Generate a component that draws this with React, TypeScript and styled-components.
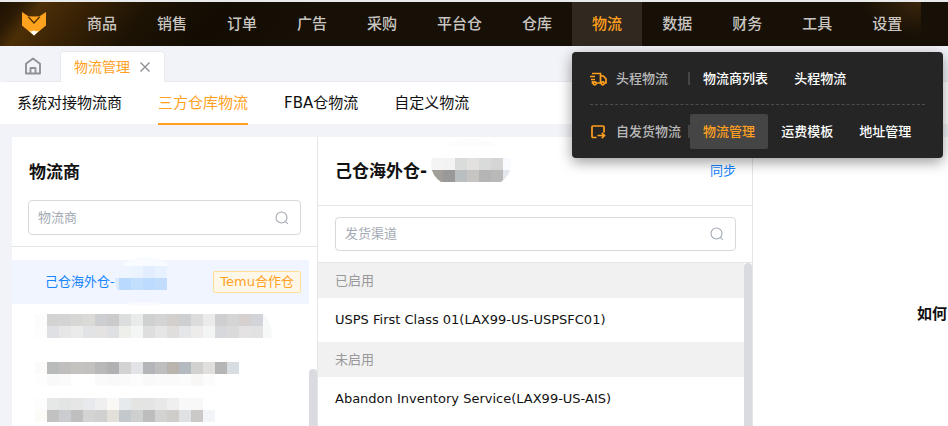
import React from "react";
import styled, { createGlobalStyle } from "styled-components";

const ORANGE = "#ffa01e";
const BLUE = "#1684fc";
const LINE = "#e4e5e7";
const CANVAS = "#f2f3f8";

const GlobalStyle = createGlobalStyle`
  *, *::before, *::after { box-sizing: border-box; }
  body {
    margin: 0;
    background: ${CANVAS};
    color: #111;
    font: 13px/20px "DejaVu Sans", "Noto Sans CJK SC", sans-serif;
  }
  button, input { font: inherit; }
  a { color: inherit; text-decoration: none; }
`;

const Page = styled.div`
  display: flex;
  flex-direction: column;
  height: 100vh;
  overflow: hidden;
  border-top: 2px solid #e9eaec;
`;

const Header = styled.header`
  display: flex;
  flex: none;
  height: 44px;
  background:
    radial-gradient(ellipse 60px 34px at 921px 0, #3a250b, transparent) 0 0 / 921px 100% no-repeat,
    linear-gradient(128deg, #1d1203 0, #2b1a04 18px, #4c2f07 34px, #3a2305 66px, #1d1304 120px, #120c03 180px, #171006 260px);
`;

const LogoLink = styled.a`
  display: flex;
  align-items: center;
  flex: none;
  width: 67px;
  padding-left: 21px;
`;

const Nav = styled.nav`
  display: flex;
`;

const NavItem = styled.div<{ $active?: boolean }>`
  position: relative;
  flex: none;
  display: flex;
  align-items: center;
  padding: 0 20px;
  font-size: 15px;
  font-weight: 500;
  white-space: nowrap;
  color: ${(p) => (p.$active ? ORANGE : "#c9c6c1")};
  background: ${(p) => (p.$active ? "#312820" : "transparent")};
`;

const Menu = styled.div`
  position: absolute;
  z-index: 5;
  top: 50px;
  left: 0;
  padding: 9px 18px;
  border-radius: 4px;
  background: #252525;
  box-shadow: 0 4px 14px rgba(0, 0, 0, 0.4);
  font-size: 13px;
`;

const MenuRow = styled.div`
  display: flex;
  align-items: center;
  height: 35px;
  & + & {
    height: 45px;
    margin-top: 8px;
    padding-top: 9px;
    border-top: 1px dashed #4d4d4d;
  }
`;

const MenuLabel = styled.span`
  display: flex;
  align-items: center;
  gap: 9px;
  width: 98px;
  color: #b9b9b9;
`;

const MenuLinks = styled.div`
  display: flex;
  align-items: center;
  width: 237px;
  &::before {
    content: "";
    width: 2px;
    height: 13px;
    background: #454545;
  }
`;

const MenuLink = styled.a<{ $active?: boolean }>`
  padding: 0 13px;
  border-radius: 2px;
  line-height: 35px;
  color: ${(p) => (p.$active ? ORANGE : "#fff")};
  background: ${(p) => (p.$active ? "#454545" : "transparent")};
`;

const TabBar = styled.div`
  display: flex;
  align-items: flex-end;
  flex: none;
  height: 36px;
  padding-left: 6px;
  background: linear-gradient(#e9eaed, #e9eaed) 6px 100% / 100% 1px no-repeat;
`;

const HomeButton = styled.button`
  display: flex;
  align-items: center;
  width: 54px;
  height: 35px;
  padding: 2px 0 0 18px;
  border: 0;
  background: none;
  color: #8f9299;
`;

const Tab = styled.div`
  display: flex;
  align-items: center;
  gap: 10px;
  height: 31px;
  padding: 0 14px 0 13px;
  border: 1px solid #e9eaed;
  border-bottom: 0;
  border-radius: 4px 4px 0 0;
  background: #fff;
  color: ${ORANGE};
  font-size: 14px;
`;

const CloseButton = styled.button`
  display: flex;
  padding: 0;
  border: 0;
  background: none;
  color: #8d8f94;
`;

const SubNav = styled.nav`
  display: flex;
  flex: none;
  gap: 36px;
  height: 43px;
  padding: 0 17px;
  background: linear-gradient(#fff, #fff) 0 0 / 100% 42px no-repeat;
  font-size: 15px;
`;

const SubLink = styled.a<{ $active?: boolean }>`
  height: 43px;
  line-height: 43px;
  white-space: nowrap;
  color: ${(p) => (p.$active ? ORANGE : "#111")};
  box-shadow: ${(p) => (p.$active ? `inset 0 -2px ${ORANGE}` : "none")};
`;

const Main = styled.main`
  display: flex;
  flex: 1;
  min-height: 0;
  margin: 12px 0 0 12px;
  background: #fff;
`;

const Column = styled.section<{ $width: number }>`
  display: flex;
  flex-direction: column;
  flex: none;
  width: ${(p) => p.$width}px;
  border-right: 1px solid ${LINE};
`;

const PanelHead = styled.div`
  padding: 20px 16px 11px;
  border-bottom: 1px solid ${LINE};
`;

const TitleBar = styled.div`
  display: flex;
  align-items: center;
  gap: 4px;
  height: 69px;
  padding: 0 16px;
  border-bottom: 1px solid ${LINE};
`;

const Title = styled.h2`
  margin: 0;
  padding-left: 1px;
  font-size: 17px;
  line-height: 30px;
  font-weight: 700;
  white-space: nowrap;
`;

const SyncButton = styled.button`
  margin-left: auto;
  padding: 0;
  border: 0;
  background: none;
  color: ${BLUE};
`;

const SearchArea = styled.div`
  padding: 11px 16px 11px 17px;
  border-bottom: 1px solid ${LINE};
`;

const SearchBox = styled.label`
  display: flex;
  align-items: center;
  height: 34px;
  padding: 0 11px 0 9px;
  border: 1px solid #d8d9dc;
  border-radius: 4px;
  color: #a3a9b3;
  ${PanelHead} & {
    margin-top: 13px;
    height: 35px;
  }
`;

const SearchInput = styled.input`
  flex: 1;
  min-width: 0;
  padding: 0;
  border: 0;
  outline: 0;
  background: none;
  color: #111;
  &::placeholder { color: #a3a9b3; opacity: 1; }
`;

const Scroller = styled.div`
  display: flex;
  flex: 1;
  min-height: 0;
  overflow: hidden;
`;

const List = styled.ul`
  flex: 1;
  min-width: 0;
  margin: 0;
  padding: 0;
  list-style: none;
`;

const CarrierList = styled(List)`
  padding-top: 13px;
`;

const Thumb = styled.div<{ $start: number }>`
  flex: none;
  width: 8px;
  margin-top: ${(p) => p.$start}px;
  border-radius: 4px 4px 0 0;
  background: #dadbe0;
`;

const CarrierItem = styled.li<{ $active?: boolean }>`
  display: flex;
  align-items: center;
  height: 44px;
  padding: 0 8px 0 ${(p) => (p.$active ? 33 : 23)}px;
  color: ${BLUE};
  background: ${(p) => (p.$active ? "#f0f5ff" : "transparent")};
`;

const Tag = styled.span`
  margin-left: auto;
  padding: 0 6px;
  border: 1px solid #ffdf94;
  border-radius: 2px;
  background: #fff8e8;
  color: ${ORANGE};
  white-space: nowrap;
`;

const GroupRow = styled.li`
  padding: 0 17px;
  line-height: 35px;
  color: #999;
  background: #f1f1f1;
`;

const ChannelRow = styled.li`
  padding: 0 17px;
  line-height: 44px;
  white-space: nowrap;
`;

const Guide = styled.section`
  display: flex;
  flex: 1;
  justify-content: flex-end;
  min-width: 0;
  padding: 162px 1px 0 0;
`;

const GuideTitle = styled.h3`
  margin: 0;
  font-size: 15px;
  line-height: 30px;
  white-space: nowrap;
`;

const Svg = styled.svg`
  display: block;
  flex: none;
  overflow: visible;
`;

const Logo = () => (
  <Svg width="26" height="26" viewBox="0 0 26 26" aria-label="首页">
    <path d="M1 1L7 5H19L25 1V14.5L13 24.500L1 14.500Z" fill="#ffa31f" />
    <path d="M7 5.500L13 12L19 5.500" fill="none" stroke="#4a2d06" strokeWidth="1.200" />
    <path d="M7 5.500H19" stroke="#b97212" strokeWidth="1" />
    <path d="M8 19.500L10.500 20.500L13 19.500L15.500 20.500L18 19.500L13 24.500Z" fill="#fff" />
  </Svg>
);

const HomeIcon = () => (
  <Svg width="18" height="18" viewBox="0 0 18 18" fill="none" stroke="currentColor" strokeWidth="1.900">
    <path d="M2 6.800L9 1.500L16 6.800V16.500H2ZM6.500 16V11H11.500V16" strokeLinejoin="round" />
  </Svg>
);

const CloseIcon = () => (
  <Svg width="10" height="10" viewBox="0 0 10 10" stroke="currentColor" strokeWidth="1.400">
    <path d="M0.500 0.500L9.500 9.500M9.500 0.500L0.500 9.500" />
  </Svg>
);

const SearchIcon = () => (
  <Svg width="14" height="14" viewBox="0 0 14 14" fill="none" stroke="currentColor" strokeWidth="1.100">
    <circle cx="6.500" cy="6.500" r="5.500" />
    <path d="M10.300 10.300L12.800 12.800" />
  </Svg>
);

const TruckIcon = () => (
  <Svg width="17" height="14" viewBox="0 0 17 14" fill="none" stroke={ORANGE} strokeWidth="1.700">
    <path d="M2 1.500H10.500V11M10.500 4H13.500L16 7V11H14.500M0 4.500H5M1 7.500H5M2.500 9V11H3M6.500 11H11" />
    <circle cx="4.700" cy="11.300" r="1.500" />
    <circle cx="12.700" cy="11.300" r="1.500" />
  </Svg>
);

const ParcelIcon = () => (
  <Svg width="17" height="16" viewBox="0 0 17 16" fill="none" stroke={ORANGE} strokeWidth="1.700">
    <path d="M6.500 13.500H3Q2 13.500 2 12.500V3Q2 2 3 2H13Q14 2 14 3V8.500M7.500 11.500H14.500M11.800 8.800L14.500 11.500L11.800 14.200" />
  </Svg>
);

const CELL = 12;

const Cells = ({ rows, top, left = 0 }: { rows: string[]; top: number; left?: number }) => (
  <g shapeRendering="crispEdges">
    {rows.map((row, r) =>
      row.split(" ").map((c, i) => (
        <rect key={`${r}-${i}`} x={left + i * CELL} y={top + r * CELL} width={CELL} height={CELL} fill={`#${c}`} />
      ))
    )}
  </g>
);

const maskedCarriers = [
  {
    top: 10,
    edge: "M228 10Q237 18 237 34H228Z",
    rows: [
      "fcfcfc d3d3d3 d4d4d4 d7d7d5 dbdad7 cdced1 cbcbcc dcdede e9ebea cfd1d0 d4d4d4 d3cfcd cdcfd1 dcdcdd ebebeb cfcfd1 d5d5d5 d6d1ce d3d4da",
      "fdfdfd dfe0e3 e6e6e6 ebebeb e1e3e7 e5e3e2 dfe0e4 eeeeeb f4f6f5 dedede e6e6e6 e0dedc e4e6e9 eeecea f3f5f4 d6d8db dadadb e5e2e3 e1e2e1",
    ],
  },
  {
    top: 14,
    rows: [
      "fcfbf9 b8bbba c0bfbe c5c3c0 c2c1bf b8b8b9 b1b1b4 d3d3d4 e1e3e6 b4b5b8 bebebe b9b4ae b5bac1 d1d1d0 e0dfdd b5b5b5 d8dde1",
      "fefefe f9f9f9 fafafa ffffff ffffff fafafa f9f9f9 fafafa fcfcfc f9f9f9 fafafa fafafa fbfbfb f8f7f5 fcfcfc",
    ],
  },
  {
    top: 6,
    rows: [
      "fdfdfd e6e7e7 e3e5e5 e6e6e6 e7e9ec efefef faf8f5 e6eaec e4e5e3 e4e4e4 e8e8e8 efefef f8f8f8 f8f8f8",
      "fcfbf8 c2c2c2 cacccf bfbfc0 d4d4d4 d0d0d0 e3e0da c3c8cd cdd0cf bdbdbd d3d3d1 cecdca e0e1e4 cac9c7 f2f4f7",
    ],
  },
];

const nav = ["商品", "销售", "订单", "广告", "采购", "平台仓", "仓库", "物流", "数据", "财务", "工具", "设置"];

const SearchField = ({ label }: { label: string }) => (
  <SearchBox>
    <SearchInput type="text" placeholder={label} aria-label={label} />
    <SearchIcon />
  </SearchBox>
);

const LogisticsMenu = () => (
  <Menu>
    <MenuRow>
      <MenuLabel><TruckIcon />头程物流</MenuLabel>
      <MenuLinks>
        <MenuLink href="#providers">物流商列表</MenuLink>
        <MenuLink href="#first-leg">头程物流</MenuLink>
      </MenuLinks>
    </MenuRow>
    <MenuRow>
      <MenuLabel><ParcelIcon />自发货物流</MenuLabel>
      <MenuLinks>
        <MenuLink href="#manage" $active>物流管理</MenuLink>
        <MenuLink href="#templates">运费模板</MenuLink>
        <MenuLink href="#addresses">地址管理</MenuLink>
      </MenuLinks>
    </MenuRow>
  </Menu>
);

export default function App() {
  return (
    <Page>
      <GlobalStyle />
      <Header>
        <LogoLink href="#home"><Logo /></LogoLink>
        <Nav>
          {nav.map((name) => (
            <NavItem key={name} $active={name === "物流"}>
              <a href="#nav">{name}</a>
              {name === "物流" && <LogisticsMenu />}
            </NavItem>
          ))}
        </Nav>
      </Header>
      <TabBar>
        <HomeButton aria-label="首页"><HomeIcon /></HomeButton>
        <Tab>
          物流管理
          <CloseButton aria-label="关闭"><CloseIcon /></CloseButton>
        </Tab>
      </TabBar>
      <SubNav>
        <SubLink href="#system">系统对接物流商</SubLink>
        <SubLink href="#third-party" $active>三方仓库物流</SubLink>
        <SubLink href="#fba">FBA仓物流</SubLink>
        <SubLink href="#custom">自定义物流</SubLink>
      </SubNav>
      <Main>
        <Column $width={306}>
          <PanelHead>
            <Title>物流商</Title>
            <SearchField label="物流商" />
          </PanelHead>
          <Scroller>
            <CarrierList>
              <CarrierItem $active>
                己仓海外仓-
                <Svg width="52" height="44" viewBox="0 0 52 44" aria-hidden="true">
                  <path d="M6 6Q16 -3 32 -3Q46 -3 54 6Z" fill="#f8fbff" />
                  <Cells top={6} left={4} rows={["eff5ff ebf3ff e2eeff e7f1ff", "bad9fe c3dffe bddbff c2dcfd"]} />
                  <path d="M0 18H4V30H2Q0 24 0 18Z" fill="#dceaff" />
                  <ellipse cx="29" cy="44" rx="17" ry="2" fill="#f9fbff" />
                </Svg>
                <Tag>Temu合作仓</Tag>
              </CarrierItem>
              {maskedCarriers.map((m) => (
                <CarrierItem key={m.top}>
                  <Svg width="240" height="44" viewBox="0 0 240 44" aria-hidden="true">
                    <Cells rows={m.rows} top={m.top} />
                    {m.edge && <path d={m.edge} fill="#f7f8f8" />}
                  </Svg>
                </CarrierItem>
              ))}
            </CarrierList>
            <Thumb $start={122} />
          </Scroller>
        </Column>
        <Column $width={435}>
          <TitleBar>
            <Title>己仓海外仓-</Title>
            <Svg width="80" height="44" viewBox="0 0 80 44" aria-hidden="true">
              <clipPath id="title-mask"><ellipse cx="40" cy="16" rx="40" ry="26" /></clipPath>
              <g clipPath="url(#title-mask)">
                <rect y="-10" width="80" height="7" fill="#fcfcfc" />
                <Cells
                  top={9}
                  rows={["f4f4f4 f3f3f3 d9dcdb e2e1e0 d9dbda d5d5d5 f8faff", "a29e99 999999 b9bec0 c7c5c1 b5b5b5 b9b9b9 e3e8ee"]}
                />
              </g>
            </Svg>
            <SyncButton>同步</SyncButton>
          </TitleBar>
          <SearchArea><SearchField label="发货渠道" /></SearchArea>
          <Scroller>
            <List>
              <GroupRow>已启用</GroupRow>
              <ChannelRow>USPS First Class 01(LAX99-US-USPSFC01)</ChannelRow>
              <GroupRow>未启用</GroupRow>
              <ChannelRow>Abandon Inventory Service(LAX99-US-AIS)</ChannelRow>
            </List>
            <Thumb $start={0} />
          </Scroller>
        </Column>
        <Guide><GuideTitle>如何</GuideTitle></Guide>
      </Main>
    </Page>
  );
}
